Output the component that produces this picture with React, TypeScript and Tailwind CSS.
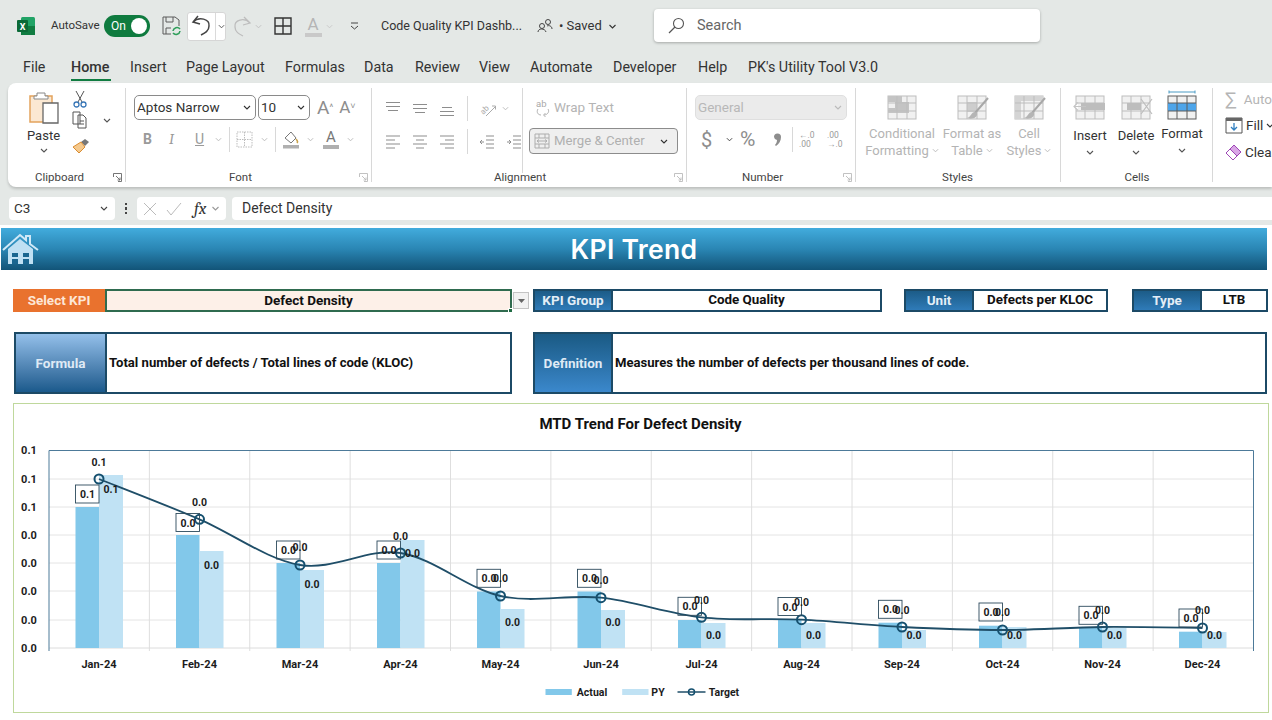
import React from 'react';

function Chev({ color = '#555', w = 8 }: { color?: string; w?: number }) {
  return (
    <svg width={w} height={5} viewBox="0 0 8 5" className="shrink-0">
      <path d="M1 1l3 3 3-3" fill="none" stroke={color} strokeWidth="1.1" />
    </svg>
  );
}

function Launcher({ color = '#666' }: { color?: string }) {
  return (
    <svg width="9" height="9" viewBox="0 0 9 9" className="shrink-0">
      <path d="M.5 4V.5H8.500V8.500H5M3 3l4 4M7 4.500V7H4.500" fill="none" stroke={color} strokeWidth=".9" />
    </svg>
  );
}

function Sep({ className }: { className: string }) {
  return <div className={`w-px bg-[#d8d8d8] shrink-0 ${className}`} />;
}

function Lines({ kind, color = '#8d8d8d' }: { kind: string; color?: string }) {
  const rows: Record<string, string> = {
    top: 'M1 1.500h14M1 5.500h14M3 9.500h10',
    mid: 'M1 3.500h14M1 7.500h14M3 11.500h10',
    bot: 'M3 6.500h10M1 10.500h14M1 14.500h14',
    left: 'M1 2h14M1 6h9M1 10h14M1 14h9',
    center: 'M1 2h14M4 6h8M1 10h14M4 14h8',
    right: 'M1 2h14M6 6h9M1 10h14M6 14h9',
    out: 'M7 2h8M7 6h8M7 10h8M7 14h8M5 8H1M3 6L1 8l2 2',
    inn: 'M7 2h8M7 6h8M7 10h8M7 14h8M1 8h4M3 6l2 2-2 2',
  };
  return (
    <svg width="16" height="16" viewBox="0 0 16 16" className="shrink-0">
      <path d={rows[kind]} fill="none" stroke={color} strokeWidth="1" />
    </svg>
  );
}

function GridIcon({ variant }: { variant: string }) {
  const color = variant === 'format' ? '#5d5d5d' : '#bdbdbd';
  return (
    <svg width="34" height="30" viewBox="0 0 34 30" className="shrink-0">
      {variant === 'format' && <path d="M4 2h26M4 .5v3M30 .5v3" stroke="#4b9bc4" strokeWidth="1" fill="none" />}
      <rect x="3" y="6" width="28" height="23" fill="#f1f1f1" stroke={color} />
      {variant === 'cond' && <path d="M3 6h14v6H3zM10 12h14v6H10zM3 18h21v5H3z" fill="#c4c4c4" />}
      {variant === 'table' && <path d="M12 12h10v10H12z" fill="#cdcdcd" />}
      {variant === 'cell' && <path d="M3 6h28v5H3zM3 6h6v23H3z" fill="#d4d4d4" />}
      {variant === 'insert' && <path d="M8 13h24v7H8z" fill="#bdbdbd" />}
      {variant === 'delete' && <path d="M8 13h14v7H8z" fill="#bdbdbd" />}
      {variant === 'format' && <path d="M3 13h28v8H3z" fill="#4ea5ea" />}
      <path d="M3 13h28M3 21h28M12 6v23M22 6v23" stroke={color} strokeWidth="1" fill="none" />
      {variant === 'insert' && <path d="M13 16.500H1M5 12.500L1 16.500l4 4" stroke="#c5c5c5" strokeWidth="1.200" fill="#fff" />}
      {variant === 'delete' && <path d="M22 9l11 15M33 9L22 24" stroke="#bdbdbd" strokeWidth="1.200" />}
      {(variant === 'table' || variant === 'cell') && (
        <>
          <path d="M33 8L20 23" stroke="#a8a8a8" strokeWidth="2" />
          <path d="M20 22c-4 0-4 5-8 6 6 2 11-1 10-5z" fill="#b5b5b5" />
        </>
      )}
    </svg>
  );
}

function BigCmd({ icon, lines, w, chev, dis, top = 'mt-[7px]' }: { icon: string; lines: string[]; w: string; chev?: boolean; dis?: boolean; top?: string }) {
  return (
    <div className={`flex flex-col items-center shrink-0 ${w}`}>
      <div className="mt-[7px] h-[30px]">
        <GridIcon variant={icon} />
      </div>
      <div className={`${top} flex flex-col items-center text-[13px] leading-[17px] ${dis ? 'text-[#b4b4b4]' : 'text-[#333]'}`}>
        {lines.map((l, i) => (
          <span key={l} className="flex items-center gap-[3px] whitespace-nowrap">
            {l}
            {chev && i === lines.length - 1 && <Chev color="#bbb" w={7} />}
          </span>
        ))}
        {!chev && (
          <span className="mt-[6px]">
            <Chev />
          </span>
        )}
      </div>
    </div>
  );
}

function GroupLabel({ text }: { text: string }) {
  return <span className="text-[11.5px] leading-none text-[#444]">{text}</span>;
}

function TitleBar() {
  return (
    <div className="h-[45px] pt-[7px] flex items-center text-[#333] text-[12.500px] shrink-0">
      <svg width="18" height="18" viewBox="0 0 18 18" className="ml-[17px] shrink-0">
        <rect x="4" y="0" width="14" height="18" rx="1.500" fill="#21a366" />
        <rect x="4" y="9" width="14" height="9" fill="#107c41" />
        <rect x="0" y="3" width="11" height="12" rx="1" fill="#0b6a37" />
        <text x="5.500" y="12.500" textAnchor="middle" fontSize="9" fontWeight="700" fill="#fff" fontFamily="Roboto">X</text>
      </svg>
      <span className="ml-[16px] w-[53px] text-[11.500px] whitespace-nowrap">AutoSave</span>
      <div className="w-[46px] h-[22px] rounded-full bg-[#0f7b3f] flex items-center justify-between pl-[7px] pr-[3px] text-white text-[12px]">
        On
        <div className="w-[16px] h-[16px] rounded-full bg-white" />
      </div>
      <svg width="20" height="20" viewBox="0 0 20 20" className="ml-[12px] shrink-0">
        <path d="M1 1h12l4 3v6M1 1v17h8" fill="none" stroke="#5a5a5a" />
        <path d="M4 1v5h7V1M4 18v-6h5" fill="none" stroke="#5a5a5a" />
        <path d="M11 15a4 4 0 017-2M18 15a4 4 0 01-7 2" fill="none" stroke="#2f9e5a" strokeWidth="1.600" />
      </svg>
      <div className="ml-[5px] w-[39px] h-[29px] bg-white rounded-[3px] border border-[#d6d6d6] flex items-center shrink-0">
        <svg width="27" height="24" viewBox="0 0 27 24" className="shrink-0">
          <path d="M10 2L5 8l7 2M5 8c6-6 17-3 16 4 0 5-4 7-8 9" fill="none" stroke="#444" strokeWidth="1.500" />
        </svg>
        <div className="h-full w-px bg-[#dadada]" />
        <div className="ml-[2px]"><Chev w={7} /></div>
      </div>
      <svg width="20" height="22" viewBox="0 0 20 22" className="ml-[7px] shrink-0">
        <path d="M11 2l6 6-7 2M17 8C11 2 1 5 2 12c0 5 4 7 8 9" fill="none" stroke="#bdbdbd" strokeWidth="1.300" />
      </svg>
      <div className="ml-[2px]"><Chev color="#c2c2c2" w={7} /></div>
      <svg width="18" height="18" viewBox="0 0 18 18" className="ml-[12px] shrink-0">
        <path d="M1 1h16v16H1zM9 1v16M1 9h16" fill="none" stroke="#333" strokeWidth="1.400" />
      </svg>
      <div className="ml-[12px] w-[18px] flex flex-col items-center leading-none text-[#b5b5b5] text-[17px]">
        A
        <div className="w-[17px] h-[4px] bg-[#c9c9c9]" />
      </div>
      <div className="ml-[4px]"><Chev color="#c9c9c9" w={7} /></div>
      <svg width="9" height="9" viewBox="0 0 9 9" className="ml-[17px] shrink-0">
        <path d="M1 1h7M1 4l3.500 3L8 4" fill="none" stroke="#444" />
      </svg>
      <span className="ml-[22px] w-[146px] whitespace-nowrap">Code Quality KPI Dashb...</span>
      <svg width="16" height="16" viewBox="0 0 16 16" className="ml-[10px] shrink-0">
        <circle cx="5" cy="8" r="2.500" fill="none" stroke="#444" />
        <circle cx="11" cy="4" r="2.500" fill="none" stroke="#444" />
        <path d="M1 14c0-4 7-4 8 0M10 8c2-1 5 0 5 3" fill="none" stroke="#444" />
      </svg>
      <span className="ml-[6px] w-[48px] whitespace-nowrap text-[13px]">• Saved</span>
      <Chev color="#333" w={11} />
      <div className="ml-[36px] w-[386px] h-[33px] -mt-[1px] bg-white rounded-[4px] shadow-[0_1px_3px_rgba(0,0,0,.28)] flex items-center pl-[14px] text-[#666] text-[14.500px]">
        <svg width="17" height="17" viewBox="0 0 17 17" className="shrink-0">
          <circle cx="10.500" cy="6.500" r="5" fill="none" stroke="#555" strokeWidth="1.100" />
          <path d="M7 10l-6 6" stroke="#555" strokeWidth="1.200" />
        </svg>
        <span className="ml-[12px]">Search</span>
      </div>
    </div>
  );
}

const tabs = [
  ['File', 'w-[48px] ml-[23px]'],
  ['Home', 'w-[59px]'],
  ['Insert', 'w-[56px]'],
  ['Page Layout', 'w-[99px]'],
  ['Formulas', 'w-[79px]'],
  ['Data', 'w-[51px]'],
  ['Review', 'w-[64px]'],
  ['View', 'w-[51px]'],
  ['Automate', 'w-[83px]'],
  ['Developer', 'w-[85px]'],
  ['Help', 'w-[50px]'],
  ["PK's Utility Tool V3.0", 'w-[140px]'],
];

function Tabs() {
  return (
    <div className="h-[38px] pt-[7px] flex items-center text-[14.300px] text-[#333] shrink-0">
      {tabs.map(([t, c]) => (
        <span key={t} className={`${c} relative whitespace-nowrap ${t === 'Home' ? 'font-medium' : ''}`}>
          {t}
          {t === 'Home' && <span className="absolute left-0 top-[22px] w-[40px] h-[2.500px] bg-[#107c41]" />}
        </span>
      ))}
    </div>
  );
}

function Clipboard() {
  return (
    <div className="w-[117px] flex shrink-0 relative">
      <div className="w-[70px] flex flex-col items-center pl-[1px]">
        <svg width="30" height="33" viewBox="0 0 30 33" className="mt-[8px] ml-[1px]">
          <path d="M1 5h22v26H1z" fill="#fbe8d2" stroke="#e3a35c" strokeWidth="1.500" />
          <path d="M8 5V2h8v3h3v3H5V5z" fill="#fff" stroke="#888" />
          <path d="M14 12h15v20H14z" fill="#fff" stroke="#666" strokeWidth="1.300" />
        </svg>
        <span className="mt-[3px] text-[13px] text-[#333] leading-[18px]">Paste</span>
        <span className="mt-[3px]"><Chev /></span>
      </div>
      <div className="flex flex-col ml-[-7px] w-[44px]">
        <svg width="16" height="18" viewBox="0 0 16 18" className="mt-[7px] ml-[1px] shrink-0">
          <path d="M4 1l6 11M12 1L6 12" stroke="#555" fill="none" />
          <circle cx="4.500" cy="14.500" r="2.500" fill="none" stroke="#3a78b8" strokeWidth="1.300" />
          <circle cx="11.500" cy="14.500" r="2.500" fill="none" stroke="#3a78b8" strokeWidth="1.300" />
        </svg>
        <div className="flex items-center mt-[3px]">
          <svg width="18" height="18" viewBox="0 0 18 18" className="shrink-0">
            <path d="M2 1h7v12H2zM7 4h5l3 3v10H7z" fill="#fff" stroke="#555" />
            <path d="M9 10h4M9 13h4" stroke="#555" />
          </svg>
          <span className="ml-[14px]"><Chev /></span>
        </div>
        <svg width="19" height="16" viewBox="0 0 19 16" className="mt-[9px] shrink-0">
          <path d="M10 4l4-3 4 3-4 4z" fill="#777" />
          <path d="M2 9l8-5 4 5-6 6z" fill="#f5c98d" stroke="#d98c32" />
        </svg>
      </div>
    </div>
  );
}

function FontGroup() {
  return (
    <div className="w-[245px] pl-[8px] shrink-0 text-[#333]">
      <div className="flex items-center mt-[12px] h-[25px]">
        <div className="w-[122px] h-[25px] border border-[#8a8a8a] rounded-[5px] flex items-center justify-between px-[2px] pr-[4px] text-[13.500px] bg-white">
          Aptos Narrow
          <Chev color="#333" />
        </div>
        <div className="ml-[2px] w-[52px] h-[25px] border border-[#8a8a8a] rounded-[5px] flex items-center justify-between pl-[2px] pr-[4px] text-[13.500px] bg-white">
          10
          <Chev color="#333" />
        </div>
        <span className="ml-[7px] text-[19px] text-[#8d8d8d] leading-none">A<sup className="text-[9px]">^</sup></span>
        <span className="ml-[6px] text-[17px] text-[#8d8d8d] leading-none">A<sup className="text-[9px]">˅</sup></span>
      </div>
      <div className="flex items-center mt-[7px] h-[25px] text-[#9a9a9a]">
        <span className="ml-[9px] w-[26px] font-bold text-[14px]">B</span>
        <span className="w-[26px] italic font-serif text-[15px]">I</span>
        <span className="w-[20px] underline text-[14px]">U</span>
        <Chev color="#bbb" w={7} />
        <Sep className="ml-[7px] h-[25px]" />
        <svg width="17" height="17" viewBox="0 0 17 17" className="ml-[6px]">
          <path d="M1 1h15v15H1zM8.500 1v15M1 8.500h15" fill="none" stroke="#bdbdbd" strokeDasharray="1.500 1" />
        </svg>
        <span className="ml-[8px]"><Chev color="#bbb" w={7} /></span>
        <Sep className="ml-[7px] h-[25px]" />
        <svg width="18" height="19" viewBox="0 0 18 19" className="ml-[6px]">
          <path d="M3 8l6-6 5 6-5 5z" fill="none" stroke="#777" />
          <path d="M14 9c2 2 2 3 1 4" stroke="#c9a24b" strokeWidth="1.500" fill="none" />
          <rect x="1" y="15" width="16" height="3.500" fill="#b0b0b0" />
        </svg>
        <span className="ml-[7px]"><Chev color="#bbb" w={7} /></span>
        <div className="ml-[9px] w-[16px] flex flex-col items-center leading-none text-[15px] text-[#777]">
          A
          <div className="w-[16px] h-[3.500px] bg-[#b0b0b0]" />
        </div>
        <span className="ml-[8px]"><Chev color="#bbb" w={7} /></span>
      </div>
    </div>
  );
}

function AlignGroup() {
  return (
    <div className="w-[314px] pl-[13px] shrink-0 flex">
      <div className="w-[137px] shrink-0">
        <div className="flex items-center mt-[13px] h-[25px] gap-[11px]">
          <Lines kind="top" />
          <Lines kind="mid" />
          <Lines kind="bot" />
          <Sep className="h-[25px] ml-[1px]" />
          <svg width="18" height="18" viewBox="0 0 18 18" fontFamily="Roboto, sans-serif">
            <text x="1" y="13" fontSize="8" fill="#aaa" transform="rotate(-45 5 10)">ab</text>
            <path d="M7 16l9-9M13 6h3.500v3.500" fill="none" stroke="#aaa" />
          </svg>
          <span className="-ml-[6px]"><Chev color="#bbb" w={7} /></span>
        </div>
        <div className="flex items-center mt-[8px] h-[25px] gap-[11px]">
          <Lines kind="left" />
          <Lines kind="center" />
          <Lines kind="right" />
          <Sep className="h-[25px] ml-[1px]" />
          <Lines kind="out" />
          <Lines kind="inn" />
        </div>
      </div>
      <Sep className="h-[85px] mt-[5px]" />
      <div className="pl-[6px]">
        <div className="flex items-center mt-[12px] h-[25px] text-[13.500px] text-[#b4b4b4]">
          <svg width="16" height="18" viewBox="0 0 16 18" className="ml-[6px]" fontFamily="Roboto, sans-serif">
            <text x="1" y="8" fontSize="9.500" fill="#a8a8a8">ab</text>
            <path d="M3 10c-2 3 0 6 3 6M13 10c2 3-1 6-4 6M10.500 14L8.500 16l2 2" fill="none" stroke="#b4b4b4" />
          </svg>
          <span className="ml-[3px]">Wrap Text</span>
        </div>
        <div className="mt-[8px] w-[149px] h-[26px] rounded-[4px] border border-[#8c8c8c] bg-[#efefef] flex items-center pl-[4px] pr-[9px] text-[13.200px] text-[#b0b0b0]">
          <svg width="16" height="16" viewBox="0 0 16 16">
            <path d="M1 1h14v14H1zM1 5h14M1 11h14M5 1v4M11 1v4M5 11v4M11 11v4M3 8h10M5 6.500L3 8l2 1.500M11 6.500L13 8l-2 1.500" fill="none" stroke="#adadad" />
          </svg>
          <span className="ml-[4px] flex-1 whitespace-nowrap">Merge &amp; Center</span>
          <Chev color="#333" />
        </div>
      </div>
    </div>
  );
}

function NumberGroup() {
  return (
    <div className="w-[168px] pl-[8px] shrink-0">
      <div className="mt-[12px] w-[152px] h-[25px] rounded-[5px] bg-[#ebebeb] border border-[#dfdfdf] flex items-center justify-between pl-[2px] pr-[4px] text-[13.500px] text-[#b8b8b8]">
        General
        <Chev color="#bbb" />
      </div>
      <div className="flex items-center mt-[7px] h-[25px] text-[#8d8d8d]">
        <span className="ml-[6px] w-[25px] text-[20px] leading-none">$</span>
        <Chev color="#444" w={7} />
        <span className="ml-[7px] w-[28px] text-[21px] leading-none">%</span>
        <svg width="9" height="14" viewBox="0 0 9 14" className="ml-[5px] mr-[10px] shrink-0">
          <path d="M1 4a3.500 3.500 0 117 0c0 4-2 7-5 9l-1-1c1-1 2-3 2-5a3.500 3.500 0 01-3-3z" fill="#8d8d8d" />
        </svg>
        <Sep className="h-[25px]" />
        <span className="ml-[6px] w-[28px] text-[8.500px] leading-[9px] text-[#9a9a9a]">←.0<br />.00</span>
        <span className="w-[20px] text-[8.500px] leading-[9px] text-[#9a9a9a]">.00<br />→.0</span>
      </div>
    </div>
  );
}

function EditingGroup() {
  return (
    <div className="pl-[12px] flex flex-col text-[13.500px] overflow-hidden">
      <div className="flex items-center h-[26px] mt-[3px] text-[#b5b5b5]">
        <span className="w-[21px] text-[19px] leading-none">∑</span>Auto
      </div>
      <div className="flex items-center h-[27px] text-[#333]">
        <svg width="18" height="17" viewBox="0 0 18 17" className="mr-[3px] shrink-0">
          <path d="M1 1h16v15H1z" fill="#fff" stroke="#555" />
          <path d="M1 1h16v3H1z" fill="#666" />
          <path d="M9 6v7M6 10l3 3 3-3" fill="none" stroke="#2f7fc1" strokeWidth="1.300" />
        </svg>
        Fill
        <span className="ml-[3px]"><Chev color="#333" /></span>
      </div>
      <div className="flex items-center h-[27px] text-[#333]">
        <svg width="17" height="17" viewBox="0 0 17 17" className="mr-[3px] shrink-0">
          <path d="M1 9l8-8 7 7-8 8z" fill="#d9a6e6" stroke="#9d46b5" />
          <path d="M1 9l4-4 7 7-4 4z" fill="#fff" stroke="#9d46b5" />
        </svg>
        Clear
      </div>
    </div>
  );
}

function Ribbon() {
  return (
    <div className="ml-[8px] h-[104px] bg-white rounded-l-[8px] shadow-[0_2px_3px_rgba(0,0,0,.18)] shrink-0 flex flex-col overflow-hidden">
      <div className="flex h-[88px]">
        <Clipboard />
        <Sep className="h-[94px] mt-[5px]" />
        <FontGroup />
        <Sep className="h-[94px] mt-[5px]" />
        <AlignGroup />
        <Sep className="h-[94px] mt-[5px]" />
        <NumberGroup />
        <Sep className="h-[94px] mt-[5px]" />
        <div className="w-[204px] flex shrink-0 pl-[14px]">
          <BigCmd icon="cond" lines={['Conditional', 'Formatting']} w="w-[64px]" chev dis top="mt-[5px]" />
          <BigCmd icon="table" lines={['Format as', 'Table']} w="w-[76px]" chev dis top="mt-[5px]" />
          <BigCmd icon="cell" lines={['Cell', 'Styles']} w="w-[38px]" chev dis top="mt-[5px]" />
        </div>
        <Sep className="h-[94px] mt-[5px]" />
        <div className="w-[151px] flex shrink-0 pl-[6px]">
          <BigCmd icon="insert" lines={['Insert']} w="w-[46px]" />
          <BigCmd icon="delete" lines={['Delete']} w="w-[46px]" />
          <BigCmd icon="format" lines={['Format']} w="w-[46px]" top="mt-[5px]" />
        </div>
        <Sep className="h-[94px] mt-[5px]" />
        <EditingGroup />
      </div>
      <div className="h-[12px] pt-[1px] flex items-start">
        <div className="w-[118px] flex shrink-0 justify-between pl-[27px] pr-[4px] items-center"><GroupLabel text="Clipboard" /><Launcher /></div>
        <div className="w-[246px] flex shrink-0 justify-between pl-[103px] pr-[4px] items-center"><GroupLabel text="Font" /><Launcher color="#bbb" /></div>
        <div className="w-[315px] flex shrink-0 justify-between pl-[122px] pr-[4px] items-center"><GroupLabel text="Alignment" /><Launcher color="#bbb" /></div>
        <div className="w-[169px] flex shrink-0 justify-between pl-[55px] pr-[4px] items-center"><GroupLabel text="Number" /><Launcher color="#bbb" /></div>
        <div className="w-[205px] flex shrink-0 justify-center pr-[2px] items-center"><GroupLabel text="Styles" /></div>
        <div className="w-[152px] flex shrink-0 justify-center items-center"><GroupLabel text="Cells" /></div>
      </div>
    </div>
  );
}

function FormulaBar() {
  return (
    <div className="mt-[10px] h-[23px] flex items-stretch text-[13.500px] text-[#333] shrink-0">
      <div className="ml-[9px] w-[106px] bg-white rounded-[4px] flex items-center justify-between pl-[5px] pr-[6px]">
        C3
        <Chev color="#444" w={10} />
      </div>
      <div className="w-[22px] flex flex-col items-center justify-center gap-[2px]">
        <span className="w-[2.500px] h-[2.500px] bg-[#444]" />
        <span className="w-[2.500px] h-[2.500px] bg-[#444]" />
        <span className="w-[2.500px] h-[2.500px] bg-[#444]" />
      </div>
      <div className="w-[89px] bg-white rounded-[4px] flex items-center pl-[6px]">
        <svg width="14" height="14" viewBox="0 0 14 14" className="shrink-0"><path d="M1 1l12 12M13 1L1 13" stroke="#bbb" fill="none" /></svg>
        <svg width="16" height="14" viewBox="0 0 16 14" className="ml-[9px] shrink-0"><path d="M1 8l4 5L15 1" stroke="#bbb" fill="none" /></svg>
        <span className="ml-[12px] font-serif italic text-[17px] text-[#333] leading-none">fx</span>
        <span className="ml-[5px]"><Chev color="#999" w={9} /></span>
      </div>
      <div className="ml-[6px] flex-1 bg-white rounded-l-[4px] flex items-center pl-[10px] text-[14px]">Defect Density</div>
    </div>
  );
}

function Field({ label, value, labelCls, valueCls, grad }: { label: string; value: string; labelCls: string; valueCls: string; grad: string }) {
  return (
    <div className="flex h-[23px] shrink-0 border-2 border-[#1c4a66]">
      <div className={`${labelCls} ${grad} flex items-center justify-center text-[#e3eef7] font-bold text-[13.500px] border-r-2 border-[#1c4a66]`}>{label}</div>
      <div className={`${valueCls} bg-white flex items-center justify-center font-bold text-[13.400px] text-[#111] whitespace-nowrap`}>{value}</div>
    </div>
  );
}

function TextBox({ label, value, labelCls, valueCls, grad }: { label: string; value: string; labelCls: string; valueCls: string; grad: string }) {
  return (
    <div className="flex h-[62px] shrink-0 border-2 border-[#1c4a66]">
      <div className={`${labelCls} ${grad} flex items-center justify-center text-[#dfeaf5] font-bold text-[13.500px] border-r-2 border-[#1c4a66]`}>{label}</div>
      <div className={`${valueCls} bg-white flex items-center pl-[2px] font-bold text-[13.100px] text-[#111] whitespace-nowrap`}>{value}</div>
    </div>
  );
}

const PX = [99.5, 200, 300.5, 401, 501, 601.5, 702, 802, 902.5, 1003, 1103, 1203];
const MONTHS = ['Jan-24', 'Feb-24', 'Mar-24', 'Apr-24', 'May-24', 'Jun-24', 'Jul-24', 'Aug-24', 'Sep-24', 'Oct-24', 'Nov-24', 'Dec-24'];
const ACTUAL = [507, 535, 563, 563, 591.5, 591.5, 620, 620, 622.7, 625.7, 628, 631.7];
const PY = [475, 551, 570, 540, 609, 610, 623, 623, 630, 627, 628, 632];
const TARGET = [479, 519.3, 565, 553, 596, 597.7, 617.3, 619.7, 627, 630, 627, 628];
const T_LABEL = [462, 502, 547.5, 536, 578.7, 580, 600, 602.7, 610, 612.5, 610, 610];
const BOX_TOP = [485, 513.5, 541, 541, 569.3, 569.3, 597.3, 597.5, 600.3, 603, 606.3, 609];
const PY_LABEL = [489.7, 565.7, 584, 553, 622.7, 622.7, 635.3, 635.3, 635.3, 635.3, 635.3, 635.3];
const ROWS = [450.5, 479, 507, 535, 563, 591, 620, 648];
const Y_VALS = ['0.1', '0.1', '0.1', '0.0', '0.0', '0.0', '0.0', '0.0'];

function smoothPath(xs: number[], ys: number[]) {
  let d = `M${xs[0]} ${ys[0]}`;
  for (let i = 0; i < xs.length - 1; i++) {
    const x0 = xs[Math.max(i - 1, 0)], y0 = ys[Math.max(i - 1, 0)];
    const x3 = xs[Math.min(i + 2, xs.length - 1)], y3 = ys[Math.min(i + 2, xs.length - 1)];
    const c1x = xs[i] + (xs[i + 1] - x0) / 6, c1y = ys[i] + (ys[i + 1] - y0) / 6;
    const c2x = xs[i + 1] - (x3 - xs[i]) / 6, c2y = ys[i + 1] - (y3 - ys[i]) / 6;
    d += `C${c1x} ${c1y} ${c2x} ${c2y} ${xs[i + 1]} ${ys[i + 1]}`;
  }
  return d;
}

function Chart() {
  const left = 49.5, right = 1254, cat = (right - left) / 12;
  const label = { fontSize: 10.5, fontWeight: 700, fill: '#1c1c1c', textAnchor: 'middle' as const, dominantBaseline: 'central' as const };
  return (
    <div className="ml-[13px] mt-[8.500px] w-[1256px] h-[310px] border-[1.500px] border-[#bfd89c] bg-white shrink-0">
      <svg width="1253" height="307" viewBox="14.500 404 1253 307" className="block" fontFamily="Roboto, sans-serif">
        <text x="641" y="424" fontSize="15" fontWeight="700" fill="#111" textAnchor="middle" dominantBaseline="central">MTD Trend For Defect Density</text>
        {ROWS.slice(1, 7).map((y) => <line key={y} x1={left} x2={right} y1={y} y2={y} stroke="#e4e4e4" />)}
        {Array.from({ length: 11 }, (_, i) => left + cat * (i + 1)).map((x) => <line key={x} x1={x} x2={x} y1={450.5} y2={651} stroke="#dedede" />)}
        <line x1={left} x2={right} y1={648} y2={648} stroke="#dcdcdc" />
        <path d={`M${left} 651V450.500H${right}V651`} fill="none" stroke="#4d7a99" strokeWidth="1" />
        {ROWS.map((y, i) => <text key={y} x="29.500" y={y} {...label} fontSize="11">{Y_VALS[i]}</text>)}
        {PX.map((x, i) => (
          <g key={MONTHS[i]}>
            <rect x={x - 23.5} y={ACTUAL[i]} width="23.500" height={648 - ACTUAL[i]} fill="#82c8ea" />
            <rect x={x} y={PY[i]} width="24" height={648 - PY[i]} fill="#c0e2f4" />
            <text x={x} y="664" {...label} fontSize="11">{MONTHS[i]}</text>
          </g>
        ))}
        <path d={smoothPath(PX, TARGET)} fill="none" stroke="#1f4e68" strokeWidth="1.800" />
        {PX.map((x, i) => (
          <g key={i}>
            <circle cx={x} cy={TARGET[i]} r="4.500" fill="none" stroke="#15506f" strokeWidth="2" />
            <rect x={x - 23.5} y={BOX_TOP[i]} width="23.500" height="18" fill="none" stroke="#2d4a5c" strokeWidth=".9" />
            <text x={x - 11.5} y={BOX_TOP[i] + 9.5} {...label}>{i === 0 ? '0.1' : '0.0'}</text>
            <text x={x} y={T_LABEL[i]} {...label}>{i === 0 ? '0.1' : '0.0'}</text>
            <text x={x + 12} y={PY_LABEL[i]} {...label}>{i === 0 ? '0.1' : '0.0'}</text>
          </g>
        ))}
        <rect x="546" y="689" width="26.300" height="6" fill="#82c8ea" />
        <text x="592.500" y="692" {...label}>Actual</text>
        <rect x="622.700" y="689" width="26.300" height="6" fill="#c0e2f4" />
        <text x="658.500" y="692" {...label}>PY</text>
        <line x1="678" x2="706" y1="692" y2="692" stroke="#1f4e68" strokeWidth="1.500" />
        <circle cx="692" cy="692" r="3" fill="none" stroke="#15506f" strokeWidth="1.500" />
        <text x="724.500" y="692" {...label}>Target</text>
      </svg>
    </div>
  );
}

function Sheet() {
  return (
    <div className="mt-[5px] flex-1 bg-white flex flex-col overflow-hidden">
      <div className="mt-[3px] ml-[1px] w-[1266px] h-[42px] shrink-0 bg-linear-to-b from-[#42acdd] via-[#2a86b4] to-[#125478] flex items-center">
        <svg width="37" height="33" viewBox="0 0 37 33" className="ml-[1px] shrink-0">
          <path d="M1 17L18 2l6 5V3h4v8l8 6" fill="none" stroke="#cfe8f7" strokeWidth="2" />
          <path d="M6 16L18 6l13 10v15H6z" fill="#bfe0f3" />
          <path d="M10 20h6v4h-6zM21 20h6v4h-6z" fill="#1a6690" />
          <path d="M10 26h6v5h-6zM21 26h6v5h-6z" fill="#1a6690" />
        </svg>
        <span className="flex-1 text-center pr-[38px] text-white text-[26.500px] font-semibold tracking-[.3px] leading-none" style={{ fontFamily: 'Inter, sans-serif' }}>KPI Trend</span>
      </div>
      <div className="mt-[19px] flex items-center shrink-0">
        <div className="ml-[13px] w-[92px] h-[23px] shrink-0 bg-[#e9722e] text-[#fde6d6] font-bold text-[13.500px] flex items-center justify-center">Select KPI</div>
        <div className="w-[407px] h-[23px] shrink-0 bg-[#fdf0e8] border-2 border-[#2f6b4f] flex items-center justify-center font-bold text-[13.500px] text-[#111] relative">
          Defect Density
          <span className="absolute -right-[3px] -bottom-[3px] w-[5px] h-[5px] bg-[#1f6b44] border border-white" />
        </div>
        <div className="ml-[1px] w-[16px] h-[17px] shrink-0 bg-[#f2f2f2] border border-[#c4c4c4] flex items-center justify-center">
          <svg width="7" height="4" viewBox="0 0 7 4"><path d="M0 0h7L3.500 4z" fill="#666" /></svg>
        </div>
        <div className="ml-[4px]">
          <Field label="KPI Group" value="Code Quality" labelCls="w-[78px]" valueCls="w-[267px]" grad="bg-linear-to-b from-[#1c5c88] to-[#2f7bb8]" />
        </div>
        <div className="ml-[22px]">
          <Field label="Unit" value="Defects per KLOC" labelCls="w-[68px]" valueCls="w-[132px]" grad="bg-linear-to-b from-[#1c5c88] to-[#2f7bb8]" />
        </div>
        <div className="ml-[24px]">
          <Field label="Type" value="LTB" labelCls="w-[68px]" valueCls="w-[64px]" grad="bg-linear-to-b from-[#1c5c88] to-[#2f7bb8]" />
        </div>
      </div>
      <div className="mt-[20px] flex shrink-0">
        <div className="ml-[14px]">
          <TextBox label="Formula" value="Total number of defects / Total lines of code (KLOC)" labelCls="w-[91px]" valueCls="w-[403px]" grad="bg-linear-to-b from-[#94c0ea] to-[#1a5a8c]" />
        </div>
        <div className="ml-[21px]">
          <TextBox label="Definition" value="Measures the number of defects per thousand lines of code." labelCls="w-[78px]" valueCls="w-[652px]" grad="bg-linear-to-b from-[#1a5a84] to-[#3b88cc]" />
        </div>
      </div>
      <Chart />
    </div>
  );
}

export default function App() {
  return (
    <div className="w-[1272px] h-[720px] overflow-hidden bg-[#e4e8e6] flex flex-col" style={{ fontFamily: 'Roboto, sans-serif' }}>
      <TitleBar />
      <Tabs />
      <Ribbon />
      <FormulaBar />
      <Sheet />
    </div>
  );
}
